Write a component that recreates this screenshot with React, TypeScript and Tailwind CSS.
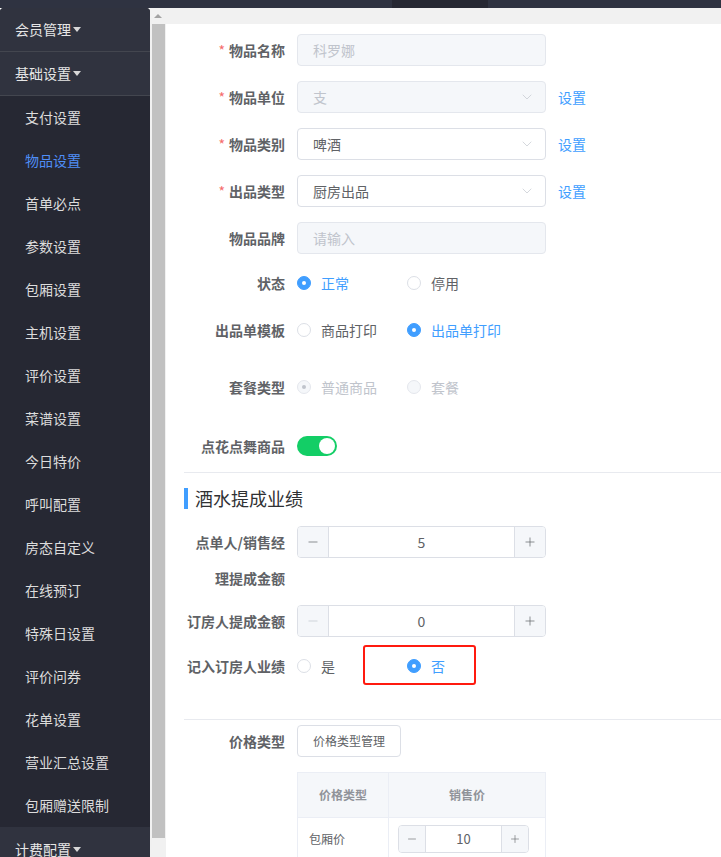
import { ChevronDown, Minus, Plus } from 'lucide-react'

const subMenus = [
  '支付设置',
  '物品设置',
  '首单必点',
  '参数设置',
  '包厢设置',
  '主机设置',
  '评价设置',
  '菜谱设置',
  '今日特价',
  '呼叫配置',
  '房态自定义',
  '在线预订',
  '特殊日设置',
  '评价问券',
  '花单设置',
  '营业汇总设置',
  '包厢赠送限制',
]

function Caret() {
  return <span className="ml-[2px] inline-block w-0 h-0 border-x-[4px] border-x-transparent border-t-[5px] border-t-[#d8d8d8]" />
}

function Sidebar() {
  return (
    <aside className="w-[150px] shrink-0 flex flex-col bg-[#262833] rounded-t-[4px] overflow-hidden">
      <div className="h-[44px] shrink-0 flex items-center pl-[15px] bg-[#30333f] border-b border-[#43464f] text-[14px] text-[#e6e6e6]">
        会员管理
        <Caret />
      </div>
      <div className="h-[44px] shrink-0 flex items-center pl-[15px] bg-[#30333f] border-b border-[#43464f] text-[14px] text-[#e6e6e6]">
        基础设置
        <Caret />
      </div>
      {subMenus.map((name) => (
        <div
          key={name}
          className={
            'h-[43px] shrink-0 flex items-center pl-[25px] text-[14px] ' +
            (name === '物品设置' ? 'text-[#4f8ef7]' : 'text-[#dcdcdc]')
          }
        >
          {name}
        </div>
      ))}
      <div className="h-[44px] shrink-0 flex items-center pl-[15px] bg-[#30333f] text-[14px] text-[#e6e6e6]">
        计费配置
        <Caret />
      </div>
    </aside>
  )
}

function Label({ text, required }: { text: string; required?: boolean }) {
  return (
    <div className="w-[101px] mr-[12px] shrink-0 text-right text-[14px] font-bold text-[#606266]">
      {required && <span className="text-[#f56c6c] mr-[4px] font-normal">*</span>}
      {text}
    </div>
  )
}

function TextBox({ value, placeholder, select, disabled }: { value?: string; placeholder?: string; select?: boolean; disabled?: boolean }) {
  return (
    <div
      className={
        'w-[249px] h-8 flex items-center pl-[15px] pr-[10px] rounded-[4px] border text-[14px] ' +
        (disabled ? 'bg-[#f5f7fa] border-[#e4e7ed] text-[#c0c4cc]' : 'bg-white border-[#dcdfe6] text-[#606266]')
      }
    >
      <span className={'flex-1 ' + (value ? '' : 'text-[#c0c4cc]')}>{value || placeholder}</span>
      {select && <ChevronDown className="w-[16px] h-[16px] text-[#c0c4cc]" strokeWidth={1} />}
    </div>
  )
}

function Radio({ label, checked, disabled }: { label: string; checked?: boolean; disabled?: boolean }) {
  let circle = 'bg-white border-[#dcdfe6]'
  if (disabled) circle = 'bg-[#f5f7fa] border-[#e4e7ed]'
  else if (checked) circle = 'bg-[#409eff] border-[#409eff]'
  let text = 'text-[#606266]'
  if (disabled) text = 'text-[#c0c4cc]'
  else if (checked) text = 'text-[#409eff]'
  return (
    <div className="w-[110px] flex items-center">
      <span className={'w-[14px] h-[14px] rounded-full border flex items-center justify-center ' + circle}>
        {checked && <span className={'w-[4px] h-[4px] rounded-full ' + (disabled ? 'bg-[#c0c4cc]' : 'bg-white')} />}
      </span>
      <span className={'ml-[10px] text-[14px] ' + text}>{label}</span>
    </div>
  )
}

function Stepper({ value, minDisabled }: { value: string; minDisabled?: boolean }) {
  return (
    <div className="w-[249px] h-8 flex rounded-[4px] border border-[#dcdfe6] overflow-hidden text-[#606266]">
      <div className="w-[31px] flex items-center justify-center bg-[#f5f7fa] border-r border-[#dcdfe6]">
        <Minus className={'w-[14px] h-[14px] ' + (minDisabled ? 'text-[#c0c4cc]' : 'text-[#606266]')} strokeWidth={1.2} />
      </div>
      <div className="flex-1 flex items-center justify-center text-[14px]">{value}</div>
      <div className="w-[31px] flex items-center justify-center bg-[#f5f7fa] border-l border-[#dcdfe6]">
        <Plus className="w-[14px] h-[14px] text-[#606266]" strokeWidth={1.2} />
      </div>
    </div>
  )
}

export default function App() {
  return (
    <div className="w-[721px] h-[857px] overflow-hidden flex flex-col bg-white" style={{ fontFamily: '"Noto Sans CJK SC", "Microsoft YaHei", sans-serif' }}>
      {/* Top bar */}
      <div className="h-[8px] shrink-0 flex bg-[#2f3341]">
        <div className="w-[392px]" />
        <div className="w-[96px] bg-[#262833]" />
      </div>

      <div className="flex flex-1 min-h-0">
        <Sidebar />

        <div className="flex-1 flex flex-col min-w-0">
          <div className="h-[16px] shrink-0 bg-[#f1f1f1] flex">
            <div className="w-[16px] flex items-center justify-center">
              <span className="w-0 h-0 border-x-[4px] border-x-transparent border-b-[4px] border-b-[#a3a3a3]" />
            </div>
          </div>

          <div className="flex flex-1 min-h-0">
            {/* Scrollbar */}
            <div className="w-[16px] shrink-0 bg-[#f1f1f1] pl-[2px] pr-[1px]">
              <div className="h-[814px] bg-[#c1c1c1]" />
            </div>

            {/* Form */}
            <div className="flex-1 pl-[18px] pt-[10px]">
              <div className="h-8 flex items-center">
                <Label text="物品名称" required />
                <TextBox placeholder="科罗娜" disabled />
              </div>
              <div className="h-8 mt-[15px] flex items-center">
                <Label text="物品单位" required />
                <TextBox placeholder="支" select disabled />
                <span className="ml-[12px] text-[14px] text-[#409eff]">设置</span>
              </div>
              <div className="h-8 mt-[15px] flex items-center">
                <Label text="物品类别" required />
                <TextBox value="啤酒" select />
                <span className="ml-[12px] text-[14px] text-[#409eff]">设置</span>
              </div>
              <div className="h-8 mt-[15px] flex items-center">
                <Label text="出品类型" required />
                <TextBox value="厨房出品" select />
                <span className="ml-[12px] text-[14px] text-[#409eff]">设置</span>
              </div>
              <div className="h-8 mt-[15px] flex items-center">
                <Label text="物品品牌" />
                <TextBox placeholder="请输入" disabled />
              </div>

              <div className="h-8 mt-[13px] flex items-center">
                <Label text="状态" />
                <Radio label="正常" checked />
                <Radio label="停用" />
              </div>
              <div className="h-8 mt-[15px] flex items-center">
                <Label text="出品单模板" />
                <Radio label="商品打印" />
                <Radio label="出品单打印" checked />
              </div>
              <div className="h-8 mt-[25px] flex items-center">
                <Label text="套餐类型" />
                <Radio label="普通商品" checked disabled />
                <Radio label="套餐" disabled />
              </div>
              <div className="h-8 mt-[27px] flex items-center">
                <Label text="点花点舞商品" />
                <div className="w-[40px] h-[20px] rounded-full bg-[#13ce66] flex items-center justify-end pr-[2px]">
                  <span className="w-[16px] h-[16px] rounded-full bg-white" />
                </div>
              </div>

              <div className="h-px mt-[10px] bg-[#e8eaef]" />

              <div className="mt-[15px] h-[21px] flex items-center">
                <span className="w-[4px] h-[21px] bg-[#409eff]" />
                <span className="ml-[7px] text-[18px] text-[#303133]">酒水提成业绩</span>
              </div>

              <div className="mt-[17px] flex items-start">
                <div className="w-[101px] mr-[12px] -mt-[2px] shrink-0 text-right text-[14px] leading-[36px] font-bold text-[#606266]">
                  点单人/销售经
                  <br />
                  理提成金额
                </div>
                <Stepper value="5" />
              </div>
              <div className="h-8 mt-[9px] flex items-center">
                <Label text="订房人提成金额" />
                <Stepper value="0" minDisabled />
              </div>
              <div className="h-8 mt-[13px] flex items-center">
                <Label text="记入订房人业绩" />
                <div className="relative h-8 flex items-center">
                  <Radio label="是" />
                  <Radio label="否" checked />
                  <div className="absolute left-[66px] -top-[5px] w-[113px] h-[40px] border-2 border-[#ff1a0f] rounded-[3px]" />
                </div>
              </div>

              <div className="h-px mt-[37px] bg-[#e8eaef]" />

              <div className="h-8 mt-[5px] flex items-center">
                <Label text="价格类型" />
                <div className="h-8 px-[15px] flex items-center rounded-[4px] border border-[#dcdfe6] text-[12px] text-[#606266]">
                  价格类型管理
                </div>
              </div>

              <div className="mt-[15px] ml-[113px] w-[249px] border border-[#ebeef5] text-[12px]">
                <div className="h-[45px] flex bg-[#f5f7fa] border-b border-[#ebeef5] font-bold text-[#909399]">
                  <div className="w-[91px] flex items-center justify-center border-r border-[#ebeef5]">价格类型</div>
                  <div className="flex-1 flex items-center justify-center">销售价</div>
                </div>
                <div className="h-[41px] flex text-[#606266]">
                  <div className="w-[91px] flex items-center pl-[11px] border-r border-[#ebeef5]">包厢价</div>
                  <div className="flex-1 flex items-center pl-[9px]">
                    <div className="w-[131px] h-[28px] flex rounded-[4px] border border-[#dcdfe6] overflow-hidden">
                      <div className="w-[27px] flex items-center justify-center bg-[#f5f7fa] border-r border-[#dcdfe6]">
                        <Minus className="w-[12px] h-[12px]" strokeWidth={1.2} />
                      </div>
                      <div className="flex-1 flex items-center justify-center text-[13px]">10</div>
                      <div className="w-[27px] flex items-center justify-center bg-[#f5f7fa] border-l border-[#dcdfe6]">
                        <Plus className="w-[12px] h-[12px]" strokeWidth={1.2} />
                      </div>
                    </div>
                  </div>
                </div>
              </div>
            </div>
          </div>
        </div>
      </div>
    </div>
  )
}
